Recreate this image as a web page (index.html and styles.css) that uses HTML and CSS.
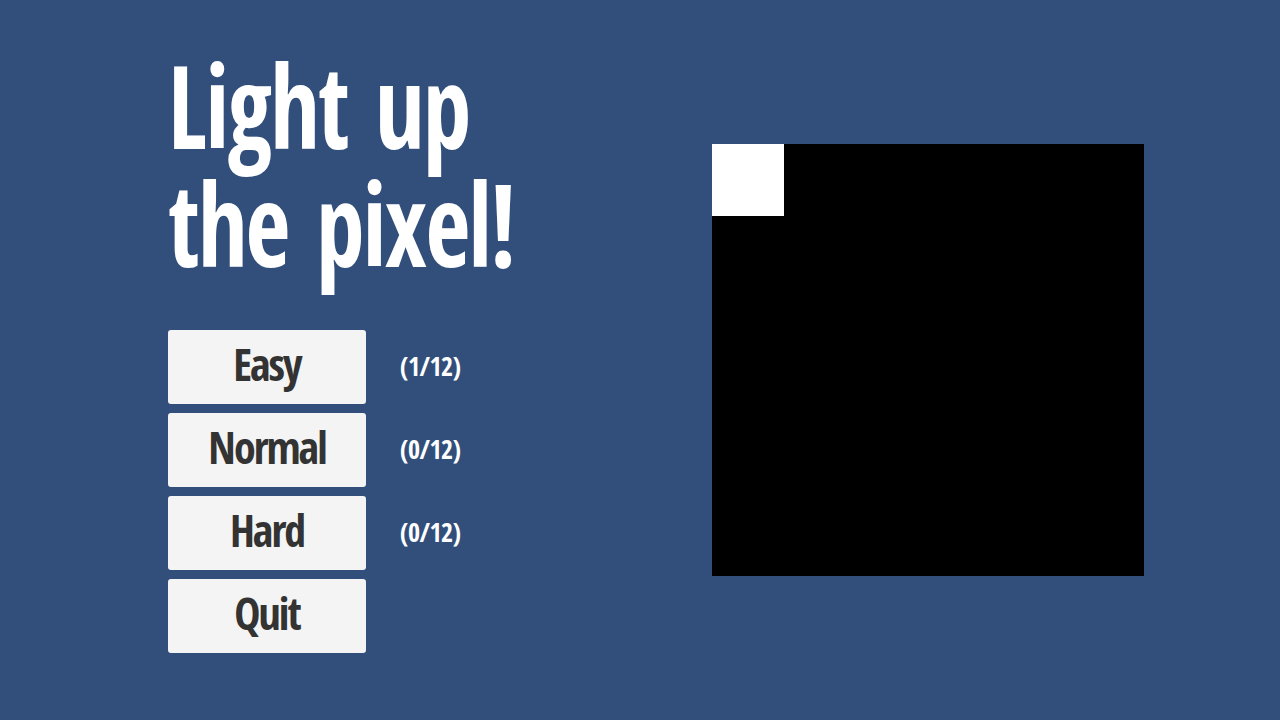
FILE: index.html
```html
<!DOCTYPE html>
<html>
<head>
<meta charset="utf-8">
<title>Light up the pixel!</title>
<link rel="stylesheet" href="styles.css">
</head>
<body>
<div class="screen">
  <div class="menu">
    <h1 class="title">Light up<br>the pixel!</h1>
    <div class="options">
      <div class="row"><button class="btn">Easy</button><span class="score">(1/12)</span></div>
      <div class="row"><button class="btn">Normal</button><span class="score">(0/12)</span></div>
      <div class="row"><button class="btn">Hard</button><span class="score">(0/12)</span></div>
      <div class="row"><button class="btn">Quit</button></div>
    </div>
  </div>
  <div class="board">
    <div class="cell on"></div><div class="cell"></div><div class="cell"></div><div class="cell"></div><div class="cell"></div><div class="cell"></div>
    <div class="cell"></div><div class="cell"></div><div class="cell"></div><div class="cell"></div><div class="cell"></div><div class="cell"></div>
    <div class="cell"></div><div class="cell"></div><div class="cell"></div><div class="cell"></div><div class="cell"></div><div class="cell"></div>
    <div class="cell"></div><div class="cell"></div><div class="cell"></div><div class="cell"></div><div class="cell"></div><div class="cell"></div>
    <div class="cell"></div><div class="cell"></div><div class="cell"></div><div class="cell"></div><div class="cell"></div><div class="cell"></div>
    <div class="cell"></div><div class="cell"></div><div class="cell"></div><div class="cell"></div><div class="cell"></div><div class="cell"></div>
  </div>
</div>
</body>
</html>
```
FILE: styles.css
```css
html, body {
  margin: 0;
  padding: 0;
  background: #324f7b;
}
body {
  width: 1280px;
  height: 720px;
  overflow: hidden;
  font-family: "Open Sans Condensed", "Roboto Condensed", "Liberation Sans", sans-serif;
}
.screen {
  display: flex;
  padding-left: 168px;
}
.menu {
  width: 544px;
  display: flex;
  flex-direction: column;
}
.title {
  margin: 45px 0 0 0;
  font-size: 116px;
  line-height: 118px;
  font-weight: 600;
  color: #ffffff;
  letter-spacing: -2px;
  word-spacing: 6px;
  white-space: nowrap;
  transform: scaleX(0.84);
  transform-origin: left top;
}
.options {
  margin-top: 49px;
  display: flex;
  flex-direction: column;
  gap: 9px;
}
.row {
  display: flex;
  align-items: center;
  gap: 34px;
}
.btn {
  width: 198px;
  height: 74px;
  border: none;
  border-radius: 3px;
  background: #f4f4f4;
  color: #333333;
  font-family: inherit;
  font-size: 44px;
  font-weight: 600;
  letter-spacing: -2px;
  padding: 0 0 6px 0;
  line-height: 68px;
}
.score {
  color: #ffffff;
  font-size: 26px;
  font-weight: 500;
  letter-spacing: -0.5px;
  margin-top: -2px;
}
.board {
  margin-top: 144px;
  width: 432px;
  height: 432px;
  display: grid;
  grid-template-columns: repeat(6, 72px);
  grid-template-rows: repeat(6, 72px);
  background: #000000;
}
.cell {
  background: #000000;
}
.cell.on {
  background: #ffffff;
}
```
